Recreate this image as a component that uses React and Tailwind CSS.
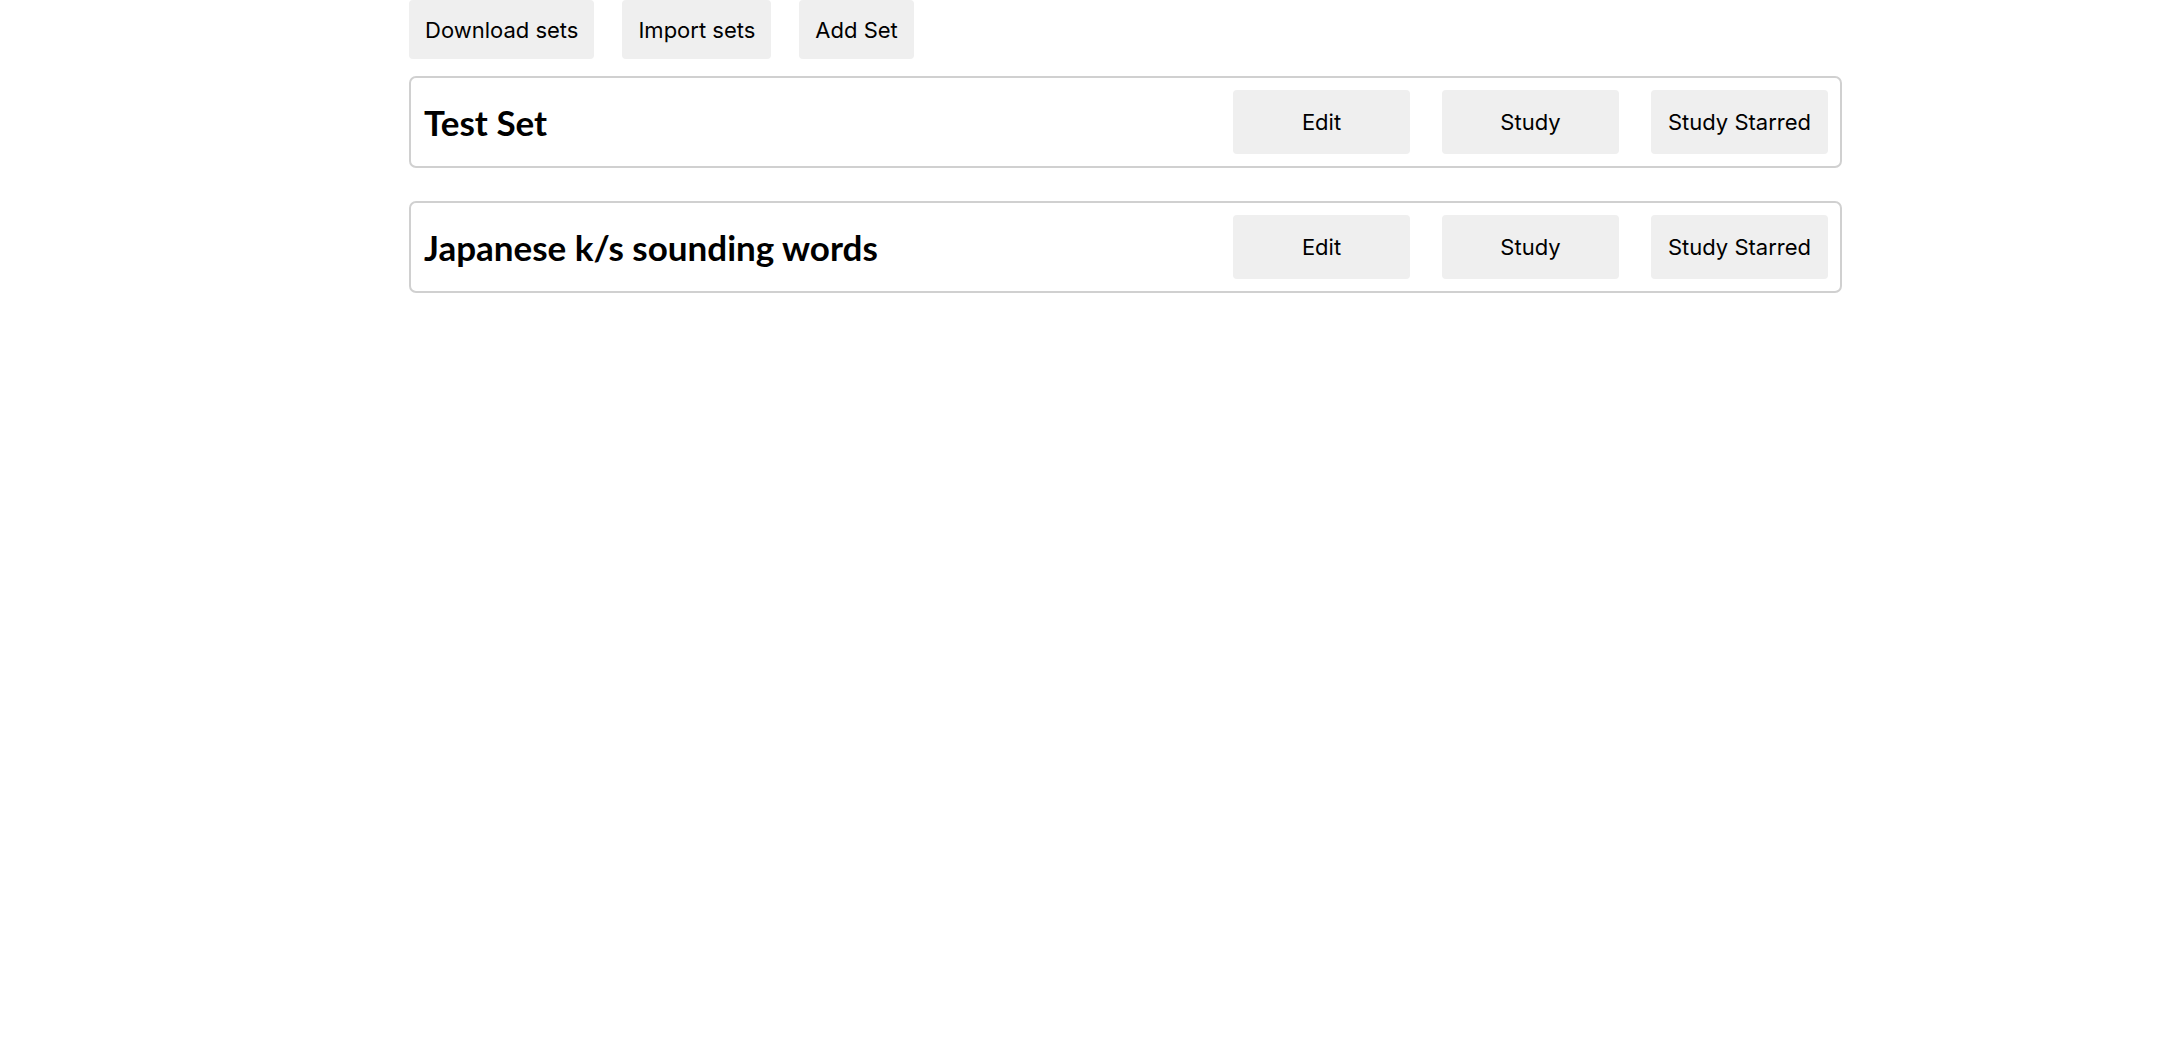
export default function App() {
  const sets = ["Test Set", "Japanese k/s sounding words"];
  const btnFont = { fontFamily: "Inter, 'Liberation Sans', sans-serif" };
  return (
    <div className="min-h-screen bg-white text-black" style={btnFont}>
      <div className="ml-[409px] w-[1433px] flex flex-col">
        <div className="flex gap-[28px]">
          <button className="h-[59px] px-[16px] rounded-[4px] bg-[#efefef] text-[22px] leading-none">Download sets</button>
          <button className="h-[59px] px-[16px] rounded-[4px] bg-[#efefef] text-[22px] leading-none">Import sets</button>
          <button className="h-[59px] px-[16px] rounded-[4px] bg-[#efefef] text-[22px] leading-none">Add Set</button>
        </div>
        <div className="mt-[17px] flex flex-col gap-[33px]">
          {sets.map((s) => (
            <div key={s} className="h-[92px] border-2 border-[#d0d0d0] rounded-[7px] p-[12px] flex items-center justify-between">
              <div className="pl-[1px] text-[35px] font-bold leading-none" style={{ fontFamily: "Lato, 'Noto Sans', sans-serif" }}>{s}</div>
              <div className="flex gap-[32px]">
                <button className="w-[177px] h-[64px] rounded-[4px] bg-[#efefef] text-[22px] leading-none">Edit</button>
                <button className="w-[177px] h-[64px] rounded-[4px] bg-[#efefef] text-[22px] leading-none">Study</button>
                <button className="w-[177px] h-[64px] rounded-[4px] bg-[#efefef] text-[22px] leading-none">Study Starred</button>
              </div>
            </div>
          ))}
        </div>
      </div>
    </div>
  );
}
